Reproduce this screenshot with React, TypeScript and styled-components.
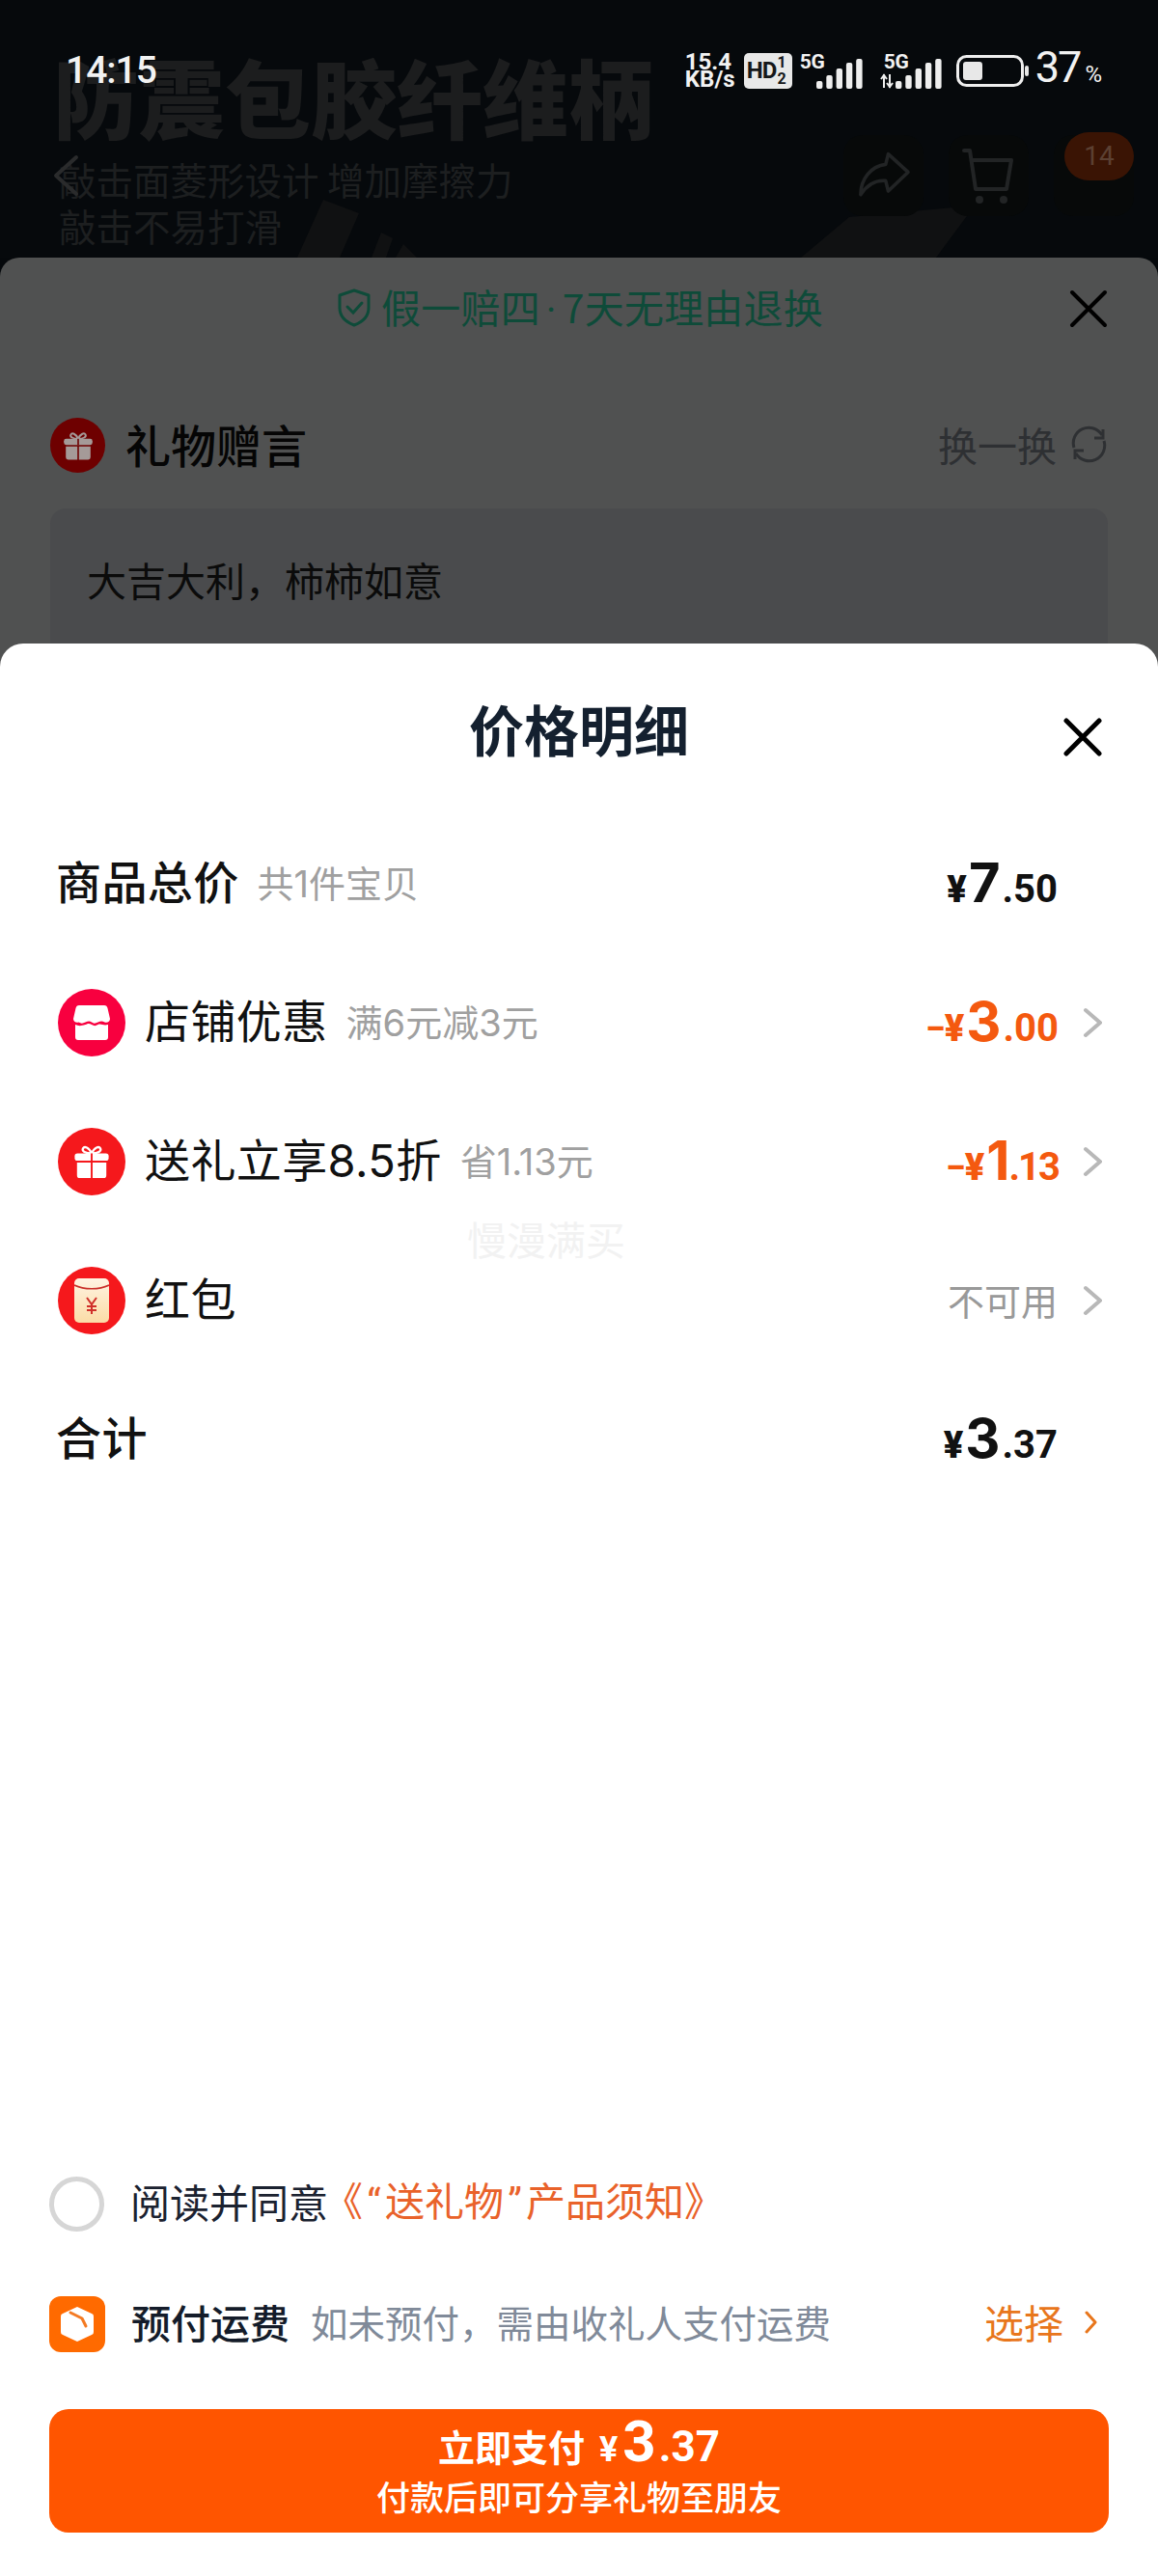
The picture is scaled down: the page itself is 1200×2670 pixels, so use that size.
import React from "react";
import styled, { createGlobalStyle } from "styled-components";

const Global = createGlobalStyle`
  html, body { margin: 0; padding: 0; background: #fff; }
  * { box-sizing: border-box; }
  body { font-family: "Noto Sans CJK SC", "Noto Sans", sans-serif; }
`;

const Page = styled.div`
  position: relative;
  width: 1200px;
  height: 2670px;
  overflow: hidden;
  display: flex;
  flex-direction: column;
  background: #05080b;
`;

/* ---------- status bar ---------- */
const StatusBar = styled.div`
  position: absolute;
  z-index: 3;
  top: 52px;
  left: 68px;
  right: 58px;
  height: 42px;
  display: flex;
  align-items: center;
  color: #f2f2f2;
`;
const Clock = styled.span`
  font: 500 39px/42px Roboto, sans-serif;
  letter-spacing: -1px;
  margin-right: auto;
`;
const Speed = styled.span`
  display: flex;
  flex-direction: column;
  font: 700 24px/18px Roboto, sans-serif;
  width: 54px;
  margin-right: 7px;
`;
const HdBadge = styled.span`
  display: flex;
  align-items: center;
  width: 50px;
  height: 37px;
  padding-left: 3px;
  border-radius: 5px;
  background: #e8e8e8;
  color: #16181a;
  font: 700 24px/1 Roboto, sans-serif;
  letter-spacing: -1px;
  margin-right: 8px;
`;
const Fraction = styled.span`
  display: flex;
  flex-direction: column;
  font: 700 16px/17px Roboto, sans-serif;
  margin-left: 1px;
`;
const Net = styled.span<{ $gap?: number }>`
  position: relative;
  display: flex;
  width: ${(p) => (p.$gap ? 68 : 65)}px;
  height: 37px;
  margin-right: ${(p) => (p.$gap ? 11 : 18)}px;
  align-items: flex-end;
  justify-content: flex-end;
`;
const NetLabel = styled.span<{ $left: number }>`
  position: absolute;
  left: ${(p) => p.$left}px;
  top: -1px;
  font: 700 21px/20px Roboto, sans-serif;
  letter-spacing: -0.5px;
`;
const Percent = styled.span`
  font: 400 45px/42px Roboto, sans-serif;
  letter-spacing: -2px;
  margin-left: 6px;
`;
const PercentSign = styled.span`
  font-size: 24px;
  letter-spacing: 0;
  margin-left: 5px;
`;

/* ---------- dimmed product hero ---------- */
const Hero = styled.header`
  position: relative;
  flex: none;
  height: 267px;
  padding: 36px 0 0 55px;
  overflow: hidden;
  background: #06090c;
`;
const HeroTitle = styled.h1`
  margin: 0;
  font: 900 89px/125px "Noto Sans CJK SC", sans-serif;
  color: #1c1d1e;
  white-space: nowrap;
`;
const HeroLine = styled.p`
  margin: 0;
  padding-left: 6px;
  font: 400 38.5px/48px "Noto Sans CJK SC", sans-serif;
  color: #1d1f20;
  white-space: nowrap;
`;
const Nav = styled.nav`
  position: absolute;
  top: 140px;
  left: 26px;
  right: 25px;
  display: flex;
  gap: 26px;
`;
const NavButton = styled.span<{ $push?: boolean; $plain?: boolean }>`
  position: relative;
  width: 83px;
  height: 84px;
  border-radius: 20px;
  background: ${(p) => (p.$plain ? "transparent" : "#070909")};
  display: flex;
  align-items: center;
  justify-content: center;
  margin-left: ${(p) => (p.$push ? "auto" : 0)};
`;
const NavBadge = styled.span`
  position: absolute;
  top: -3px;
  right: 0;
  width: 72px;
  height: 50px;
  border-radius: 25px;
  background: #3a1404;
  color: #5c4032;
  font: 400 28px/50px Roboto, sans-serif;
  text-align: center;
`;
const HeroArt = styled.svg`
  position: absolute;
  left: 0;
  bottom: 0;
`;

/* ---------- behind sheet ---------- */
const GiftSheet = styled.section`
  flex: none;
  height: 424px;
  padding: 0 52px;
  border-radius: 20px 20px 0 0;
  background: #505151;
`;
const GuaranteeRow = styled.div`
  position: relative;
  height: 106px;
  display: flex;
  align-items: center;
  justify-content: center;
  gap: 10px;
  padding-left: 2px;
  padding-bottom: 2px;
`;
const GuaranteeText = styled.span`
  font: 400 41px/1 "Noto Sans CJK SC", sans-serif;
  color: #0e4b39;
  letter-spacing: 0.2px;
`;
const MiddleDot = styled.span`
  font-family: Roboto, sans-serif;
  padding: 0 6px;
`;
const SheetClose = styled.span`
  position: absolute;
  right: 0;
  top: 33px;
  display: flex;
`;
const GiftHead = styled.div`
  margin-top: 60px;
  height: 57px;
  display: flex;
  align-items: center;
`;
const GiftBadge = styled.span`
  width: 57px;
  height: 57px;
  border-radius: 50%;
  background: #6e0000;
  display: flex;
  align-items: center;
  justify-content: center;
`;
const GiftTitle = styled.span`
  margin-left: 21px;
  padding-bottom: 4px;
  font: 500 47px/1 "Noto Sans CJK SC", sans-serif;
  color: #050505;
`;
const Swap = styled.span`
  margin-left: auto;
  padding-bottom: 3px;
  display: flex;
  align-items: center;
  gap: 13px;
  font: 400 41px/1 "Noto Sans CJK SC", sans-serif;
  color: #2e3033;
`;
const MessageBox = styled.div`
  margin-top: 37px;
  height: 180px;
  padding: 49px 38px 0;
  border-radius: 16px 16px 0 0;
  background: #4a4b4d;
  font: 400 41px/48px "Noto Sans CJK SC", sans-serif;
  color: #0b0b0b;
`;

/* ---------- price sheet ---------- */
const PriceSheet = styled.section`
  position: relative;
  flex: 1;
  margin-top: -24px;
  border-radius: 24px 24px 0 0;
  background: #fff;
  display: flex;
  flex-direction: column;
`;
const SheetHead = styled.div`
  height: 177px;
  padding-top: 51px;
  display: grid;
  grid-template-columns: 1fr auto 1fr;
  align-items: start;
`;
const SheetTitle = styled.h2`
  grid-column: 2;
  margin: 0;
  font: 700 57px/72px "Noto Sans CJK SC", sans-serif;
  color: #14202f;
`;
const HeadClose = styled.span`
  justify-self: end;
  margin: 26px 58px 0 0;
  display: flex;
`;
const Rows = styled.div`
  display: flex;
  flex-direction: column;
`;
const Row = styled.div`
  height: 144px;
  padding: 0 58px 0 60px;
  display: flex;
  align-items: center;
`;
const RowIcon = styled.span<{ $bg: string }>`
  flex: none;
  width: 70px;
  height: 70px;
  margin-right: 20px;
  border-radius: 50%;
  background: ${(p) => p.$bg};
  display: flex;
  align-items: center;
  justify-content: center;
`;
const RowLabel = styled.span<{ $strong?: boolean }>`
  margin-left: ${(p) => (p.$strong ? -2 : 0)}px;
  padding-bottom: 2px;
  font: ${(p) => (p.$strong ? 500 : 400)} 47px/60px Inter, "Noto Sans CJK SC", sans-serif;
  letter-spacing: 0.4px;
  color: #111;
`;
const RowSub = styled.span`
  margin-left: 19px;
  padding-bottom: 1px;
  font: 400 38px/60px Inter, "Noto Sans CJK SC", sans-serif;
  color: #a0a0a0;
`;
const AmountWrap = styled.span<{ $tone: string; $flush?: boolean }>`
  margin-left: auto;
  margin-right: ${(p) => (p.$flush ? 46 : -1)}px;
  padding-bottom: 2px;
  display: flex;
  align-items: baseline;
  font-family: Roboto, sans-serif;
  font-weight: 700;
  color: ${(p) => p.$tone};
`;
const Yen = styled.span`
  font-size: 38px;
  font-weight: 900;
  margin-right: 2px;
`;
const Minus = styled.span`
  font-size: 38px;
  margin-right: -1px;
`;
const Whole = styled.span<{ $narrow?: boolean }>`
  font: 700 56px/70px Inter, sans-serif;
  letter-spacing: ${(p) => (p.$narrow ? -5 : -2)}px;
`;
const Cents = styled.span<{ $narrow?: boolean }>`
  font-size: 40px;
  font-weight: 700;
  margin-left: 4px;
  letter-spacing: ${(p) => (p.$narrow ? -2 : 0)}px;
`;
const Unavailable = styled.span`
  margin-left: auto;
  padding-bottom: 3px;
  font: 400 38px/60px "Noto Sans CJK SC", sans-serif;
  color: #999;
`;
const Chevron = styled.span`
  flex: none;
  margin-left: 26px;
  display: flex;
`;
const Watermark = styled.span`
  position: absolute;
  left: 484px;
  top: 592px;
  font: 400 41px/48px "Noto Sans CJK SC", sans-serif;
  color: #f2f2f2;
`;
const Footer = styled.div`
  margin-top: auto;
  padding: 0 51px 45px;
  display: flex;
  flex-direction: column;
`;
const AgreeRow = styled.div`
  height: 58px;
  display: flex;
  align-items: center;
`;
const Radio = styled.span`
  flex: none;
  width: 57px;
  height: 57px;
  margin-right: 27px;
  border-radius: 50%;
  border: 5px solid #d6d6d6;
`;
const AgreeText = styled.span`
  padding-bottom: 5px;
  font: 400 41px/1 "Noto Sans CJK SC", sans-serif;
  color: #1b2230;
`;
const AgreeLink = styled.span`
  margin-left: -5px;
  padding-bottom: 5px;
  font: 400 41px/1 "Noto Sans CJK SC", sans-serif;
  color: #e9622a;
  white-space: nowrap;
`;
const Quote = styled.span`
  display: inline-block;
  width: 23px;
  text-align: center;
  font-family: Roboto, sans-serif;
`;
const FreightRow = styled.div`
  margin-top: 67px;
  height: 58px;
  display: flex;
  align-items: center;
`;
const FreightIcon = styled.span`
  flex: none;
  width: 58px;
  height: 58px;
  margin-right: 27px;
  border-radius: 12px;
  background: #ff6a00;
  display: flex;
  align-items: center;
  justify-content: center;
`;
const FreightLabel = styled.span`
  padding-bottom: 5px;
  font: 500 41px/1 "Noto Sans CJK SC", sans-serif;
  color: #141c2a;
`;
const FreightHint = styled.span`
  margin-left: 22px;
  padding-bottom: 5px;
  font: 400 38.5px/1 "Noto Sans CJK SC", sans-serif;
  color: #808a99;
`;
const FreightPick = styled.span`
  margin-left: auto;
  display: flex;
  align-items: center;
  gap: 22px;
  padding: 0 11px 5px 0;
  font: 400 41px/1 "Noto Sans CJK SC", sans-serif;
  color: #e8761c;
`;
const PayButton = styled.button`
  margin-top: 59px;
  height: 128px;
  padding: 0 0 15px;
  border: 0;
  border-radius: 20px;
  background: #ff5500;
  color: #fff;
  display: flex;
  flex-direction: column;
  align-items: center;
  justify-content: center;
  font-family: "Noto Sans CJK SC", sans-serif;
`;
const PayTop = styled.span`
  display: flex;
  align-items: baseline;
  height: 62px;
  font: 700 38px/62px "Noto Sans CJK SC", sans-serif;
`;
const PayYen = styled.span`
  margin-left: 15px;
  font: 700 36px/62px Roboto, sans-serif;
`;
const PayWhole = styled.span`
  margin-left: 5px;
  font: 700 60px/62px Roboto, sans-serif;
  letter-spacing: -1px;
`;
const PayCents = styled.span`
  margin-left: 4px;
  font: 700 44px/62px Roboto, sans-serif;
`;
const PaySub = styled.span`
  margin-top: 4px;
  font: 500 35px/42px "Noto Sans CJK SC", sans-serif;
`;

/* ---------- drawings ---------- */
const Cross = ({ size, width }: { size: number; width: number }) => (
  <svg width={size} height={size} viewBox="0 0 40 40">
    <path d="M3 3 37 37M37 3 3 37" stroke="#000" strokeWidth={width} strokeLinecap="round" fill="none" />
  </svg>
);
const Bars = ({ w = 48, lead = 0 }: { w?: number; lead?: number }) => (
  <svg width={w} height="31" viewBox={`0 0 ${w} 31`}>
    {lead > 0 && <path d="M4 16v14M1 21l3-4 3 4M10 16v14M7 25l3 4 3-4" stroke="#eee" strokeWidth="2" fill="none" />}
    {[8, 14, 21, 27, 31].map((h, i) => (
      <rect key={i} x={lead + i * 10.3} y={31 - h} width="6.4" height={h} rx="2" fill="#eee" />
    ))}
  </svg>
);
const Small = ({ d, color = "#a9a9a9", w = 22, h = 38, sw = 4 }: { d: string; color?: string; w?: number; h?: number; sw?: number }) => (
  <svg width={w} height={h} viewBox={`0 0 ${w} ${h}`}>
    <path d={d} stroke={color} strokeWidth={sw} fill="none" strokeLinecap="round" strokeLinejoin="round" />
  </svg>
);
const RowChevron = () => (
  <Chevron>
    <Small d="M3 4 18 17 3 30" w={20} h={34} color="#b8b8b8" />
  </Chevron>
);
const GiftGlyph = ({ size, color, tie }: { size: number; color: string; tie: string }) => (
  <svg width={size} height={size} viewBox="0 0 40 40">
    <path d="M20 11C17 4 12 3 10.5 5.5 9 8.500 13 11 20 11ZM20 11C23 4 28 3 29.500 5.500 31 8.500 27 11 20 11Z" fill="none" stroke={color} strokeWidth="2.400" />
    <rect x="1.500" y="11" width="37" height="8" rx="3" fill={color} />
    <path d="M4 21h15v17H7a3 3 0 0 1-3-3ZM21 21h15v14a3 3 0 0 1-3 3H21Z" fill={color} />
    <rect x="19" y="11" width="2" height="8" fill={tie} />
  </svg>
);

type AmountProps = { whole: string; cents: string; tone?: string; minus?: boolean; flush?: boolean; narrow?: boolean };
const Amount = ({ whole, cents, tone = "#111", minus, flush, narrow }: AmountProps) => (
  <AmountWrap $tone={tone} $flush={flush}>
    {minus && <Minus>−</Minus>}
    <Yen>¥</Yen>
    <Whole $narrow={narrow}>{whole}</Whole>
    <Cents $narrow={narrow}>.{cents}</Cents>
  </AmountWrap>
);

export default function App() {
  return (
    <Page>
      <Global />
      <StatusBar>
        <Clock>14:15</Clock>
        <Speed>
          <span>15.4</span>
          <span>KB/s</span>
        </Speed>
        <HdBadge>
          HD
          <Fraction>
            <span>1</span>
            <span>2</span>
          </Fraction>
        </HdBadge>
        <Net>
          <NetLabel $left={0}>5G</NetLabel>
          <Bars />
        </Net>
        <Net $gap={1}>
          <NetLabel $left={4}>5G</NetLabel>
          <Bars w={68} lead={16} />
        </Net>
        <svg width="76" height="33" viewBox="0 0 76 33">
          <rect x="1.500" y="1.500" width="67" height="30" rx="9" fill="none" stroke="#eee" strokeWidth="3" />
          <rect x="7" y="7" width="20" height="19" rx="3" fill="#e8e8e8" />
          <rect x="71" y="11" width="4" height="11" rx="2" fill="#e8e8e8" />
        </svg>
        <Percent>
          37<PercentSign>%</PercentSign>
        </Percent>
      </StatusBar>

      <Hero>
        <HeroArt width="1200" height="70" viewBox="0 0 1200 70">
          <path d="M308 70 335 10 372 24 352 70ZM385 70 395 44 407 50 400 70ZM410 70 418 56 432 70ZM830 70 880 28 1010 16 970 70Z" fill="#101112" />
        </HeroArt>
        <HeroTitle>防震包胶纤维柄</HeroTitle>
        <HeroLine>敲击面菱形设计 增加摩擦力</HeroLine>
        <HeroLine>敲击不易打滑</HeroLine>
        <Nav>
          <NavButton $plain>
            <Small d="M25 3 4 22 25 41" w={28} h={44} color="#2a2b2c" sw={4} />
          </NavButton>
          <NavButton $push>
            <svg width="56" height="50" viewBox="0 0 62 56">
              <path d="M36 3 59 24 36 46 33 34C22 33 12 38 4 50 4 32 16 17 33 15Z" fill="none" stroke="#222425" strokeWidth="4" strokeLinejoin="round" />
            </svg>
          </NavButton>
          <NavButton>
            <svg width="60" height="60" viewBox="0 0 60 60">
              <path d="M4 4h6l6 40h32l5-30H12" fill="none" stroke="#222425" strokeWidth="4" strokeLinejoin="round" strokeLinecap="round" />
              <circle cx="20" cy="55" r="4" fill="#222425" />
              <circle cx="45" cy="55" r="4" fill="#222425" />
            </svg>
          </NavButton>
          <NavButton>
            <NavBadge>14</NavBadge>
          </NavButton>
        </Nav>
      </Hero>

      <GiftSheet>
        <GuaranteeRow>
          <svg width="36" height="40" viewBox="0 0 36 40">
            <path d="M18 2 33 7V20C33 29 26 35 18 38 10 35 3 29 3 20V7Z" fill="none" stroke="#0e4b39" strokeWidth="3" strokeLinejoin="round" />
            <path d="M11 19l6 6 9-10" fill="none" stroke="#0e4b39" strokeWidth="3" strokeLinecap="round" />
          </svg>
          <GuaranteeText>
            假一赔四<MiddleDot>·</MiddleDot>7天无理由退换
          </GuaranteeText>
          <SheetClose>
            <Cross size={40} width={4} />
          </SheetClose>
        </GuaranteeRow>
        <GiftHead>
          <GiftBadge>
            <GiftGlyph size={32} color="#a59a98" tie="#6e0000" />
          </GiftBadge>
          <GiftTitle>礼物赠言</GiftTitle>
          <Swap>
            换一换
            <svg width="40" height="40" viewBox="0 0 40 40">
              <path d="M5 24A16 16 0 0 1 34 11M36 17A16 16 0 0 1 7 30" fill="none" stroke="#2e3033" strokeWidth="3" />
              <path d="M35 5v9h-9M6 36v-9h9" fill="none" stroke="#2e3033" strokeWidth="3" />
            </svg>
          </Swap>
        </GiftHead>
        <MessageBox>大吉大利，柿柿如意</MessageBox>
      </GiftSheet>

      <PriceSheet>
        <SheetHead>
          <SheetTitle>价格明细</SheetTitle>
          <HeadClose>
            <Cross size={40} width={5} />
          </HeadClose>
        </SheetHead>
        <Rows>
          <Row>
            <RowLabel $strong>商品总价</RowLabel>
            <RowSub>共1件宝贝</RowSub>
            <Amount whole="7" cents="50" flush />
          </Row>
          <Row>
            <RowIcon $bg="#f8003f">
              <svg width="38" height="38" viewBox="0 0 38 38">
                <path d="M6 1H32C34 1 35 2 35.500 4L38 15C38 18 35 19.500 32.500 18.500 30 17 28.500 17 25.500 18.500 22.500 20 21 20 19 18.500 17 17 15.500 17 12.500 18.500 9.500 20 8 20 5.500 18.500 3 19.500 0 18 0 15L2.500 4C3 2 4 1 6 1Z" fill="#fff" />
                <path d="M2 21C5 22.500 8 22.500 12.500 21 15.500 19.500 16.500 19.500 19 21 21.500 22.500 23 22.500 25.500 21 29 19.500 31 22.500 36 21V34A3 3 0 0 1 33 37H5A3 3 0 0 1 2 34Z" fill="#fff" />
              </svg>
            </RowIcon>
            <RowLabel>店铺优惠</RowLabel>
            <RowSub>满6元减3元</RowSub>
            <Amount whole="3" cents="00" tone="#f4590f" minus />
            <RowChevron />
          </Row>
          <Row>
            <RowIcon $bg="#f5181c">
              <GiftGlyph size={38} color="#fff" tie="#f5181c" />
            </RowIcon>
            <RowLabel>送礼立享8.5折</RowLabel>
            <RowSub>省1.13元</RowSub>
            <Amount whole="1" cents="13" tone="#f4590f" minus narrow />
            <RowChevron />
          </Row>
          <Row>
            <RowIcon $bg="#f5181c">
              <svg width="36" height="46" viewBox="0 0 36 46">
                <defs>
                  <linearGradient id="packet" x1="0" y1="0" x2="0" y2="1">
                    <stop offset="0" stopColor="#fff4e2" />
                    <stop offset="1" stopColor="#fbdca6" />
                  </linearGradient>
                </defs>
                <rect width="36" height="46" rx="5" fill="url(#packet)" />
                <path d="M0 7C10 12 26 12 36 7" stroke="#c9302a" strokeWidth="1.600" fill="none" />
                <path d="M13 20 18 27 23 20M18 27V37M13 29H23M13 33H23" stroke="#d0302a" strokeWidth="2" fill="none" />
              </svg>
            </RowIcon>
            <RowLabel>红包</RowLabel>
            <Unavailable>不可用</Unavailable>
            <RowChevron />
          </Row>
          <Row>
            <RowLabel $strong>合计</RowLabel>
            <Amount whole="3" cents="37" flush />
          </Row>
        </Rows>
        <Watermark>慢漫满买</Watermark>
        <Footer>
          <AgreeRow>
            <Radio />
            <AgreeText>阅读并同意</AgreeText>
            <AgreeLink>
              《<Quote>“</Quote>送礼物<Quote>”</Quote>产品须知》
            </AgreeLink>
          </AgreeRow>
          <FreightRow>
            <FreightIcon>
              <svg width="36" height="38" viewBox="0 0 36 38">
                <path d="M18 1 33 8a3 3 0 0 1 2 3V27a3 3 0 0 1-2 3L18 37 3 30a3 3 0 0 1-2-3V11a3 3 0 0 1 2-3Z" fill="#fff" />
                <path d="M11 7 23 13 27 21" stroke="#f47a22" strokeWidth="3" fill="none" strokeLinecap="round" strokeLinejoin="round" />
              </svg>
            </FreightIcon>
            <FreightLabel>预付运费</FreightLabel>
            <FreightHint>如未预付，需由收礼人支付运费</FreightHint>
            <FreightPick>
              选择
              <Small d="M2 2 11 12 2 22" w={14} h={24} color="#e8761c" sw={3} />
            </FreightPick>
          </FreightRow>
          <PayButton>
            <PayTop>
              立即支付
              <PayYen>¥</PayYen>
              <PayWhole>3</PayWhole>
              <PayCents>.37</PayCents>
            </PayTop>
            <PaySub>付款后即可分享礼物至朋友</PaySub>
          </PayButton>
        </Footer>
      </PriceSheet>
    </Page>
  );
}
